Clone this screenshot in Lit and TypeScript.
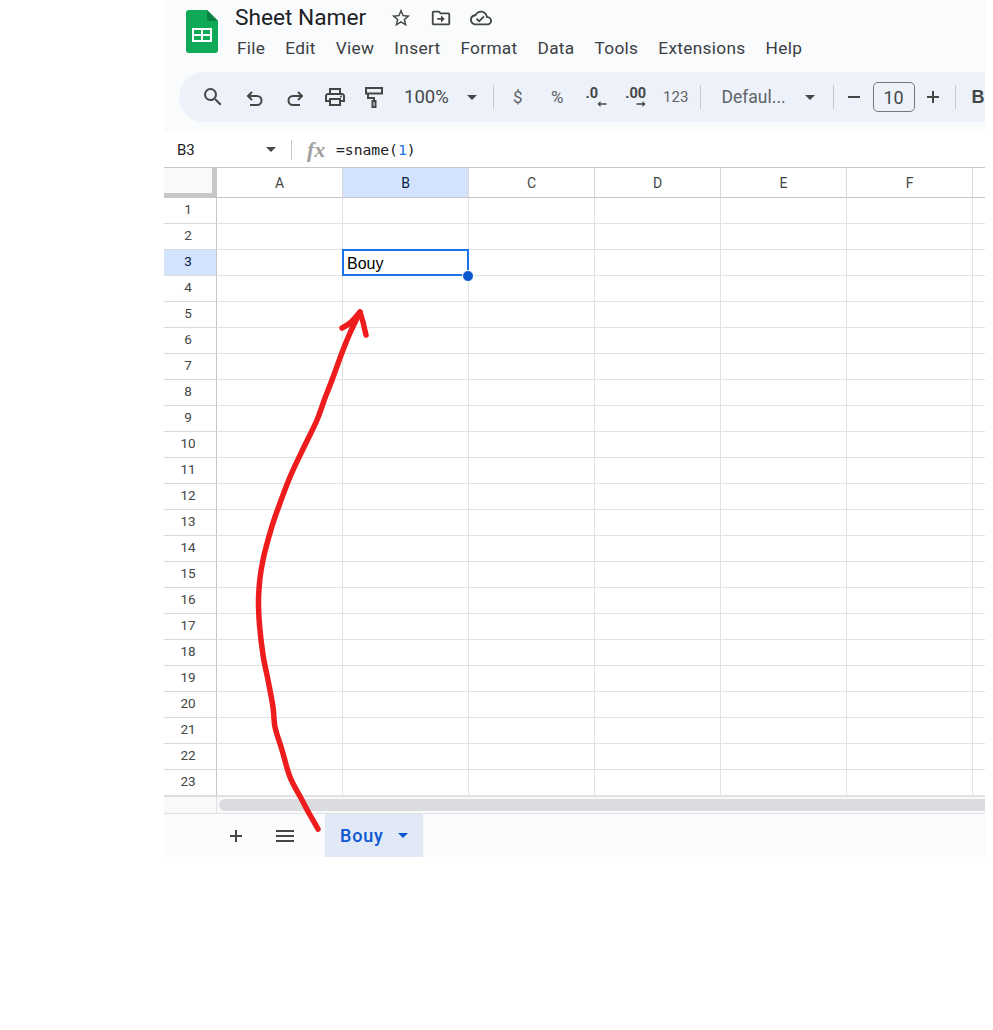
import { LitElement, html, css, svg } from "lit";
import { customElement } from "lit/decorators.js";

const COLS = ["A", "B", "C", "D", "E", "F", ""];
const ROWS = Array.from({ length: 23 }, (_, i) => i + 1);
const MENU = ["File", "Edit", "View", "Insert", "Format", "Data", "Tools", "Extensions", "Help"];

const SHAFT: [number, number][] = [
  [318, 829], [310, 815], [302, 800], [290, 777], [282, 750], [275, 727], [273, 707], [268, 680], [263, 655],
  [259.5, 625], [258.5, 600], [260, 578], [263, 560], [268, 540], [275, 517], [290, 477], [305, 445], [317, 420],
  [325, 398], [332, 380], [343, 350], [350, 333], [360, 312],
];

function smooth(p: [number, number][]): string {
  let d = `M${p[0][0]} ${p[0][1]}`;
  for (let i = 0; i < p.length - 1; i++) {
    const a = p[Math.max(i - 1, 0)], b = p[i], c = p[i + 1], e = p[Math.min(i + 2, p.length - 1)];
    const c1x = b[0] + (c[0] - a[0]) / 6, c1y = b[1] + (c[1] - a[1]) / 6;
    const c2x = c[0] - (e[0] - b[0]) / 6, c2y = c[1] - (e[1] - b[1]) / 6;
    d += `C${c1x.toFixed(1)} ${c1y.toFixed(1)} ${c2x.toFixed(1)} ${c2y.toFixed(1)} ${c[0]} ${c[1]}`;
  }
  return d;
}

const caret = html`<svg class="caret" viewBox="0 0 10 5"><path d="M0 0h10L5 5z" /></svg>`;

const ic = (body: unknown) => html`<svg class="icon" viewBox="0 0 24 24">${body}</svg>`;

const ICONS = {
  star: svg`<path d="M22 9.24l-7.19-.62L12 2 9.19 8.63 2 9.24l5.46 4.73L5.82 21 12 17.27 18.18 21l-1.63-7.03L22 9.24zM12 15.4l-3.76 2.27 1-4.28-3.32-2.88 4.38-.38L12 6.1l1.71 4.04 4.38.38-3.32 2.88 1 4.28L12 15.4z"/>`,
  folder: svg`<path d="M20 6h-8l-2-2H4c-1.1 0-2 .9-2 2v12c0 1.1.9 2 2 2h16c1.1 0 2-.9 2-2V8c0-1.1-.9-2-2-2zm0 12H4V6h5.17l2 2H20v10zm-8-4H8v-2h4V9l4 4-4 4v-3z"/>`,
  cloud: svg`<path d="M19.35 10.04C18.67 6.59 15.64 4 12 4 9.11 4 6.6 5.64 5.35 8.04 2.34 8.36 0 10.91 0 14c0 3.31 2.69 6 6 6h13c2.76 0 5-2.24 5-5 0-2.64-2.05-4.78-4.65-4.96zM19 18H6c-2.21 0-4-1.79-4-4 0-2.05 1.53-3.76 3.56-3.97l1.07-.11.5-.95C8.08 7.14 9.94 6 12 6c2.62 0 4.88 1.86 5.39 4.43l.3 1.5 1.53.11c1.56.1 2.78 1.41 2.78 2.96 0 1.65-1.35 3-3 3zm-9-3.82l-2.09-2.09L6.5 13.5 10 17l6.01-6.01-1.41-1.41z"/>`,
  search: svg`<path d="M15.5 14h-.79l-.28-.27A6.47 6.47 0 0 0 16 9.5 6.5 6.5 0 1 0 9.5 16c1.61 0 3.09-.59 4.23-1.57l.27.28v.79l5 4.99L20.49 19l-4.99-5zm-6 0C7.01 14 5 11.99 5 9.5S7.01 5 9.5 5 14 7.01 14 9.5 11.99 14 9.5 14z"/>`,
  undo: svg`<path class="st" d="M9 7 5 11l4 4M5 11H14a4.5 4.5 0 0 1 0 9H7"/>`,
  redo: svg`<path class="st" d="M15 7l4 4-4 4M19 11H10a4.5 4.5 0 0 0 0 9h7"/>`,
  print: svg`<path d="M19 8h-1V3H6v5H5c-1.66 0-3 1.34-3 3v6h4v4h12v-4h4v-6c0-1.66-1.34-3-3-3zM8 5h8v3H8V5zm8 14H8v-4h8v4zm4-4h-2v-2H6v2H4v-4c0-.55.45-1 1-1h14c.55 0 1 .45 1 1v4z"/><circle cx="18" cy="11.5" r="1"/>`,
  paint: svg`<path class="st" d="M4 3h16v5.5H4zM6 8.5v4.5h6v3M10.5 16h3v6h-3z"/>`,
};

@customElement("app-root")
export class AppRoot extends LitElement {
  static styles = css`
    :host { display: block; width: 993px; height: 1030px; position: relative; background: #fff; overflow: hidden; font-family: Roboto, "Liberation Sans", sans-serif; color: #444746; }
    .app { margin-left: 164px; width: 821px; height: 857px; overflow: hidden; display: flex; flex-direction: column; background: #f9fbfd; }
    .top { height: 72px; flex: none; display: flex; padding-left: 22px; box-sizing: border-box; }
    .logo { width: 32px; height: 43px; margin-top: 10px; flex: none; }
    .titles { margin-left: 17px; display: flex; flex-direction: column; }
    .title-row { display: flex; align-items: center; height: 36px; }
    .title { font-size: 22.7px; color: #202124; margin-right: 14px; line-height: 36px; width: 132px; white-space: nowrap; }
    .title-row .tb { width: 40px; height: 36px; display: flex; align-items: center; justify-content: center; }
    .title-row .icon { width: 22px; height: 22px; }
    .menu { display: flex; gap: 20px; font-size: 17.3px; letter-spacing: .3px; line-height: 24px; color: #3c4043; margin-left: 2px; }
    .icon { width: 24px; height: 24px; fill: #444746; display: block; }
    .icon .st { fill: none; stroke: #444746; stroke-width: 2; }
    .toolbar { margin-left: 15px; height: 50px; flex: none; background: #edf2fa; border-radius: 25px 0 0 25px; display: flex; align-items: center; padding-left: 14px; white-space: nowrap; }
    .slot { width: 40px; height: 36px; flex: none; display: flex; align-items: center; justify-content: center; font-size: 17px; color: #5f6368; position: relative; }
    .slot.n { width: 39.5px; }
    .slot.first { margin-left: 2px; }
    .zoom { font-size: 18.5px; color: #444746; width: 46px; margin-left: 10px; flex: none; }
    .caret { width: 10px; height: 5px; fill: #444746; display: block; flex: none; }
    .car-slot { width: 20px; display: flex; justify-content: center; margin-left: 12px; flex: none; }
    .car-slot.f { margin-left: 10px; }
    .sep { width: 1px; height: 24px; background: #c7c7c7; flex: none; }
    .s1 { margin: 0 4px 0 11px; }
    .s2 { margin: 0 16px 0 4px; }
    .s3 { margin: 0 6px 0 13px; }
    .s4 { margin: 0 14px 0 8px; }
    .dec { font-weight: 700; font-size: 14.5px; color: #444746; display: block; line-height: 16px; margin: -7px 0 0 -10px; }
    .dec.wide { margin-left: -1px; }
    .mini { position: absolute; width: 10px; height: 6px; left: 19.5px; top: 22px; fill: #444746; }
    .num { font-size: 15px; color: #5f6368; }
    .font { font-size: 17.5px; color: #5f6368; width: 68px; flex: none; margin-left: 5px; }
    .box { width: 40px; height: 28px; border: 1px solid #747775; border-radius: 5px; flex: none; margin-left: 5px; display: flex; align-items: center; justify-content: center; font-size: 18px; color: #444746; }
    .pm { width: 28px; height: 28px; flex: none; display: flex; align-items: center; justify-content: center; }
    .pm.plus { margin-left: 4px; }
    .pm svg { width: 16px; height: 16px; stroke: #444746; stroke-width: 2; fill: none; display: block; }
    .bold { font-family: "Liberation Sans", sans-serif; font-weight: 700; font-size: 18px; color: #444746; margin-left: 2px; }

    .gap { height: 10px; flex: none; }
    .formula { height: 35px; flex: none; background: #fff; display: flex; align-items: center; box-sizing: border-box; }
    .name { width: 102px; padding-left: 13px; font-size: 15px; color: #202124; flex: none; box-sizing: border-box; }
    .fsep { width: 1px; height: 20px; background: #c7c7c7; margin-left: 15px; flex: none; }
    .fx { font-family: "Liberation Serif", serif; font-style: italic; font-weight: 700; font-size: 22px; color: #a0a0a0; margin-left: 15px; width: 29px; flex: none; }
    .ftext { font-family: "DejaVu Sans Mono", monospace; font-size: 14.7px; color: #202124; }
    .ftext b { font-weight: 400; color: #1a73e8; }

    .sheet { flex: none; background: #fff; display: grid; grid-template-columns: 53px repeat(7, 126px); grid-template-rows: 31px; grid-auto-rows: 26px; }
    .corner, .ch { height: 31px; box-sizing: border-box; border-top: 1px solid #c7c7c7; border-bottom: 1px solid #c7c7c7; background: #fff; }
    .corner { background: #f8f9fa; border-right: 1px solid #c7c7c7; position: relative; }
    .corner::after { content: ""; position: absolute; left: 0; right: 0; bottom: 0; height: 4px; background: #c7c7c7; }
    .corner::before { content: ""; position: absolute; top: 0; bottom: 0; right: 0; width: 4px; background: #c7c7c7; }
    .ch { border-right: 1px solid #d9d9d9; display: flex; align-items: center; justify-content: center; font-size: 14px; color: #444746; }
    .ch.on { background: #d3e3fd; color: #041e49; }
    .rh { box-sizing: border-box; padding: 0 4px 4px 0; border-right: 1px solid #c7c7c7; border-bottom: 1px solid #d9d9d9; display: flex; align-items: center; justify-content: center; font-size: 13.5px; color: #444746; }
    .rh.on { background: #d3e3fd; color: #041e49; }
    .cell { box-sizing: border-box; border-right: 1px solid #e1e1e1; border-bottom: 1px solid #e1e1e1; position: relative; }
    .sel { position: absolute; left: -1px; top: -1px; width: 127px; height: 27px; box-sizing: border-box; border: 2px solid #1a73e8; display: flex; align-items: center; padding: 3px 0 0 3px; font-family: "Liberation Sans", sans-serif; font-size: 16px; color: #000; z-index: 1; }
    .handle { position: absolute; right: -7px; bottom: -8px; width: 10px; height: 10px; border-radius: 50%; background: #0b57d0; border: 1px solid #fff; }

    .hscroll { height: 18px; flex: none; box-sizing: border-box; background: #f8f9fa; border-bottom: 1px solid #e1e1e1; border-top: 1px solid #e1e1e1; display: flex; align-items: center; }
    .hleft { width: 53px; height: 100%; flex: none; box-sizing: border-box; border-right: 1px solid #e1e1e1; }
    .thumb { flex: 1; height: 12px; margin-left: 2px; background: #dadce0; border-radius: 6px 0 0 6px; }
    .tabs { flex: 1; display: flex; align-items: stretch; }
    .tbtn { width: 50px; flex: none; display: flex; align-items: center; justify-content: center; }
    .tbtn svg { width: 16px; height: 16px; stroke: #444746; stroke-width: 2; fill: none; display: block; }
    .tab { width: 98px; flex: none; margin-left: 16px; box-sizing: border-box; background: #e1e9f7; display: flex; align-items: center; padding-left: 15px; font-size: 18px; font-weight: 500; letter-spacing: .8px; color: #0b57d0; }
    .tab .caret { fill: #0b57d0; margin-left: 14px; }
    .tadd { margin-left: 47px; }
    .tmenu { width: 48px; }
    .tmenu svg { width: 20px; height: 14px; }

    .arrow { position: absolute; inset: 0; width: 993px; height: 1030px; pointer-events: none; z-index: 5; }
    .arrow path { fill: none; stroke: #ee1c1c; stroke-width: 5.5; stroke-linecap: round; stroke-linejoin: round; }
  `;

  render() {
    return html`
      <div class="app">
        <div class="top">
          <svg class="logo" viewBox="0 0 32 43">
            <path fill="#0fa958" d="M3 0H21L32 11V40a3 3 0 0 1-3 3H3a3 3 0 0 1-3-3V3a3 3 0 0 1 3-3Z" />
            <path fill="#0b8043" d="M21 0L32 11H24a3 3 0 0 1-3-3Z" />
            <path fill="#fff" d="M6 18H26V32H6Z" />
            <path fill="#0fa958" d="M8 20h7v4H8zM17 20h7v4h-7zM8 26h7v4H8zM17 26h7v4h-7z" />
          </svg>
          <div class="titles">
            <div class="title-row">
              <span class="title">Sheet Namer</span>
              <span class="tb">${ic(ICONS.star)}</span>
              <span class="tb">${ic(ICONS.folder)}</span>
              <span class="tb">${ic(ICONS.cloud)}</span>
            </div>
            <div class="menu">${MENU.map((m) => html`<span>${m}</span>`)}</div>
          </div>
        </div>
        <div class="toolbar">
          <span class="slot">${ic(ICONS.search)}</span>
          <span class="slot first">${ic(ICONS.undo)}</span>
          <span class="slot">${ic(ICONS.redo)}</span>
          <span class="slot n">${ic(ICONS.print)}</span>
          <span class="slot n">${ic(ICONS.paint)}</span>
          <span class="zoom">100%</span>
          <span class="car-slot">${caret}</span>
          <span class="sep s1"></span>
          <span class="slot n">$</span>
          <span class="slot n">%</span>
          <span class="slot n"><span class="dec">.0</span>
            <svg class="mini" viewBox="0 0 12 8"><path d="M12 3H4V0L0 4l4 4V5h8z" /></svg></span>
          <span class="slot n"><span class="dec wide">.00</span>
            <svg class="mini" viewBox="0 0 12 8"><path d="M0 3h8V0l4 4-4 4V5H0z" /></svg></span>
          <span class="slot n num">123</span>
          <span class="sep s2"></span>
          <span class="font">Defaul...</span>
          <span class="car-slot f">${caret}</span>
          <span class="sep s3"></span>
          <span class="pm"><svg viewBox="0 0 16 16"><path d="M2 8h12" /></svg></span>
          <span class="box">10</span>
          <span class="pm plus"><svg viewBox="0 0 16 16"><path d="M2 8h12M8 2v12" /></svg></span>
          <span class="sep s4"></span>
          <span class="bold">B</span>
        </div>
        <div class="gap"></div>
        <div class="formula">
          <span class="name">B3</span>
          ${caret}
          <span class="fsep"></span>
          <span class="fx">fx</span>
          <span class="ftext">=sname(<b>1</b>)</span>
        </div>
        <div class="sheet">
          <div class="corner"></div>
          ${COLS.map((c) => html`<div class="ch ${c === "B" ? "on" : ""}">${c}</div>`)}
          ${ROWS.map(
            (r) => html`
              <div class="rh ${r === 3 ? "on" : ""}">${r}</div>
              ${COLS.map(
                (c) => html`<div class="cell">
                  ${r === 3 && c === "B" ? html`<div class="sel">Bouy<span class="handle"></span></div>` : ""}
                </div>`
              )}
            `
          )}
        </div>
        <div class="hscroll"><div class="hleft"></div><div class="thumb"></div></div>
        <div class="tabs">
          <span class="tbtn tadd"><svg viewBox="0 0 16 16"><path d="M2 8h12M8 2v12" /></svg></span>
          <span class="tbtn tmenu"><svg viewBox="0 0 20 14"><path d="M1 2h18M1 7h18M1 12h18" /></svg></span>
          <span class="tab">Bouy${caret}</span>
        </div>
      </div>
      <svg class="arrow" viewBox="0 0 993 1030">
        <path d="${smooth(SHAFT)}" />
        <path d="M342 328C346 326 350 324 353 320L360 312L363 322L366 335" />
      </svg>
    `;
  }
}
